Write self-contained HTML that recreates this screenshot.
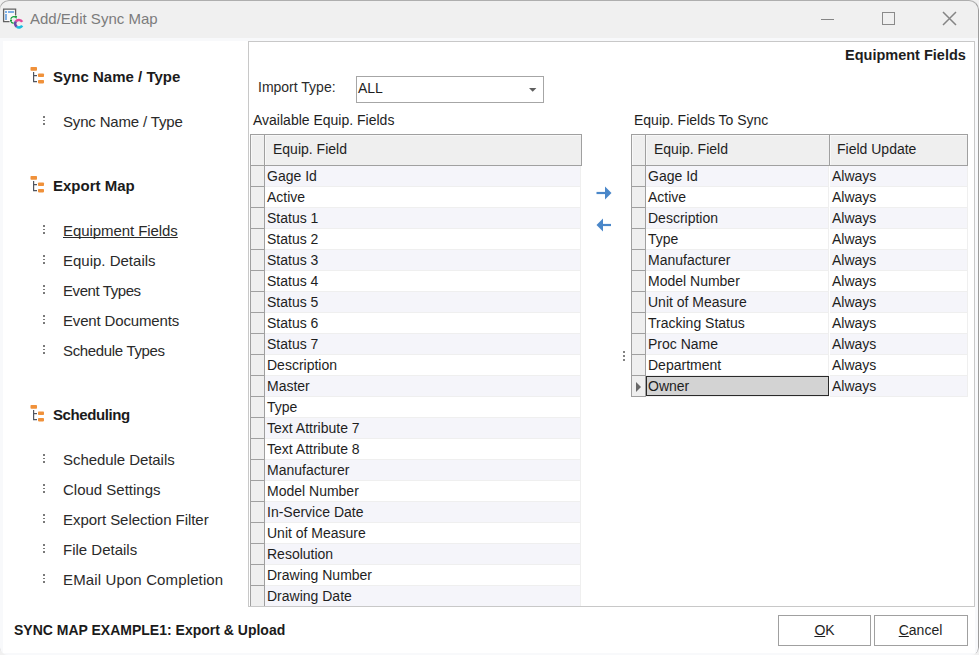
<!DOCTYPE html><html><head><meta charset="utf-8"><style>
*{margin:0;padding:0;box-sizing:border-box}
html,body{width:979px;height:655px;overflow:hidden;background:#f0f0f0;font-family:"Liberation Sans",sans-serif;}
.a{position:absolute}
#win{position:absolute;left:0;top:0;width:979px;height:655px;background:#f8f9fb;border-radius:8px 8px 8px 8px;overflow:hidden}
#tb{position:absolute;left:0;top:0;width:979px;height:38px;background:#f0f0f0}
#content{position:absolute;left:3px;top:41px;width:972px;height:612px;background:#fff}
.title{left:30px;top:8.5px;font-size:15px;color:#7c7c7c;white-space:nowrap;line-height:20px}
.nav{position:absolute;white-space:nowrap;font-size:15px;color:#2a2a2a;line-height:20px}
.navh{font-weight:bold;color:#1b1b1b}
.dots{position:absolute;width:2px;height:10px}
.dots i{position:absolute;left:0;width:2px;height:1.6px;background:#7a7a7a}
.txt{position:absolute;white-space:nowrap;font-size:14px;color:#1e1e1e;line-height:20px}
.grid{position:absolute}
.hdr{position:absolute;background:#efefef;border:1px solid #a0a0a0}
.row{position:absolute;height:21px;border-bottom:1px solid #efefef}
.rh{position:absolute;background:#efefef;border-left:1px solid #a0a0a0;border-right:1px solid #a0a0a0;border-bottom:1px solid #a0a0a0}
.btn{position:absolute;border:1px solid #a0a0a0;background:#fff;font-size:14px;color:#1e1e1e;text-align:center;line-height:28px}
</style></head><body><div id="win">
<div id="tb"></div>
<div id="content"></div>
<svg class="a" style="left:0;top:5px" width="28" height="28" viewBox="0 0 28 28">
<path d="M9.5 16.6H3.6V4.1H15.6V10.5" fill="#f9f9f9" stroke="#626262" stroke-width="1.3"/>
<rect x="5" y="6" width="2" height="2" fill="#7fb0e6"/>
<rect x="8" y="6" width="6" height="2" fill="#7fb0e6"/>
<rect x="5" y="9" width="2" height="6" fill="#7fb0e6"/>
<path d="M10.8 13.9 A3.2 3.2 0 0 1 15.6 12.2" fill="none" stroke="#14a03c" stroke-width="1.3"/>
<path d="M14.3 11.1L17.1 11.1L16.3 14Z" fill="#14a03c"/>
<rect x="10" y="14.6" width="2" height="2" fill="#0d9a34"/>
<path d="M11.2 17 A3 3 0 0 0 13.8 18.2" fill="none" stroke="#14a03c" stroke-width="1.3"/>
<path d="M22.15 16.83 A3.75 3.75 0 0 0 15.83 16.55" fill="none" stroke="#e2479b" stroke-width="2.6"/>
<path d="M15.83 16.55 A3.75 3.75 0 0 0 16.75 21.77" fill="none" stroke="#6a4aa6" stroke-width="2.6"/>
<path d="M16.75 21.77 A3.75 3.75 0 0 0 22.15 20.58" fill="none" stroke="#1bbde0" stroke-width="2.6"/>
</svg>
<div class="a title">Add/Edit Sync Map</div>
<div class="a" style="left:821px;top:18.7px;width:13px;height:1.3px;background:#858585"></div>
<div class="a" style="left:882px;top:12px;width:13px;height:13px;border:1px solid #8a8a8a"></div>
<svg class="a" style="left:942px;top:11px" width="15" height="15" viewBox="0 0 15 15"><path d="M1 1L14 14M14 1L1 14" stroke="#858585" stroke-width="1.5"/></svg>
<svg class="a" style="left:30px;top:67px" width="16" height="17" viewBox="0 0 16 17">
<rect x="0.5" y="0" width="6.5" height="3.7" rx="0.8" fill="#f0913a"/>
<path d="M3.6 5V14.6H7" fill="none" stroke="#50555f" stroke-width="1.2"/>
<path d="M3.6 8.6H7" fill="none" stroke="#50555f" stroke-width="1.2"/>
<rect x="8" y="6.5" width="6" height="3.5" rx="0.8" fill="#f0913a"/>
<rect x="8" y="13" width="6" height="3.4" rx="0.8" fill="#f0913a"/>
</svg><div class="nav navh" style="left:53px;top:67px;letter-spacing:0px">Sync Name / Type</div>
<div class="dots" style="left:43px;top:116.4px"><i style="top:0"></i><i style="top:3.5px"></i><i style="top:7px"></i></div><div class="nav" style="left:63px;top:112px;letter-spacing:-0.17px;">Sync Name / Type</div>
<svg class="a" style="left:30px;top:176px" width="16" height="17" viewBox="0 0 16 17">
<rect x="0.5" y="0" width="6.5" height="3.7" rx="0.8" fill="#f0913a"/>
<path d="M3.6 5V14.6H7" fill="none" stroke="#50555f" stroke-width="1.2"/>
<path d="M3.6 8.6H7" fill="none" stroke="#50555f" stroke-width="1.2"/>
<rect x="8" y="6.5" width="6" height="3.5" rx="0.8" fill="#f0913a"/>
<rect x="8" y="13" width="6" height="3.4" rx="0.8" fill="#f0913a"/>
</svg><div class="nav navh" style="left:53px;top:176px;letter-spacing:0px">Export Map</div>
<div class="dots" style="left:43px;top:225.4px"><i style="top:0"></i><i style="top:3.5px"></i><i style="top:7px"></i></div><div class="nav" style="left:63px;top:221px;letter-spacing:-0.07px;text-decoration:underline;text-underline-offset:0.5px;text-decoration-skip-ink:none;">Equipment Fields</div>
<div class="dots" style="left:43px;top:255.4px"><i style="top:0"></i><i style="top:3.5px"></i><i style="top:7px"></i></div><div class="nav" style="left:63px;top:251px;letter-spacing:0px;">Equip. Details</div>
<div class="dots" style="left:43px;top:285.4px"><i style="top:0"></i><i style="top:3.5px"></i><i style="top:7px"></i></div><div class="nav" style="left:63px;top:281px;letter-spacing:-0.42px;">Event Types</div>
<div class="dots" style="left:43px;top:315.4px"><i style="top:0"></i><i style="top:3.5px"></i><i style="top:7px"></i></div><div class="nav" style="left:63px;top:311px;letter-spacing:-0.16px;">Event Documents</div>
<div class="dots" style="left:43px;top:345.4px"><i style="top:0"></i><i style="top:3.5px"></i><i style="top:7px"></i></div><div class="nav" style="left:63px;top:341px;letter-spacing:-0.34px;">Schedule Types</div>
<svg class="a" style="left:30px;top:405px" width="16" height="17" viewBox="0 0 16 17">
<rect x="0.5" y="0" width="6.5" height="3.7" rx="0.8" fill="#f0913a"/>
<path d="M3.6 5V14.6H7" fill="none" stroke="#50555f" stroke-width="1.2"/>
<path d="M3.6 8.6H7" fill="none" stroke="#50555f" stroke-width="1.2"/>
<rect x="8" y="6.5" width="6" height="3.5" rx="0.8" fill="#f0913a"/>
<rect x="8" y="13" width="6" height="3.4" rx="0.8" fill="#f0913a"/>
</svg><div class="nav navh" style="left:53px;top:405px;letter-spacing:-0.41px">Scheduling</div>
<div class="dots" style="left:43px;top:454.4px"><i style="top:0"></i><i style="top:3.5px"></i><i style="top:7px"></i></div><div class="nav" style="left:63px;top:450px;letter-spacing:-0.06px;">Schedule Details</div>
<div class="dots" style="left:43px;top:484.4px"><i style="top:0"></i><i style="top:3.5px"></i><i style="top:7px"></i></div><div class="nav" style="left:63px;top:480px;letter-spacing:0px;">Cloud Settings</div>
<div class="dots" style="left:43px;top:514.4px"><i style="top:0"></i><i style="top:3.5px"></i><i style="top:7px"></i></div><div class="nav" style="left:63px;top:510px;letter-spacing:-0.05px;">Export Selection Filter</div>
<div class="dots" style="left:43px;top:544.4px"><i style="top:0"></i><i style="top:3.5px"></i><i style="top:7px"></i></div><div class="nav" style="left:63px;top:540px;letter-spacing:0px;">File Details</div>
<div class="dots" style="left:43px;top:574.4px"><i style="top:0"></i><i style="top:3.5px"></i><i style="top:7px"></i></div><div class="nav" style="left:63px;top:570px;letter-spacing:0.13px;">EMail Upon Completion</div>
<div class="a" style="left:248px;top:41px;width:727px;height:566px;border:1px solid #c8c8c8;background:#fff;overflow:hidden">
<div class="txt" style="left:596px;top:3px;font-weight:bold;font-size:14.5px">Equipment Fields</div>
<div class="txt" style="left:9px;top:35px;color:#2a2a2a">Import Type:</div>
<div class="a" style="left:107px;top:34px;width:188px;height:27px;border:1px solid #a6a6a6;background:#fff"></div>
<div class="txt" style="left:109px;top:36px">ALL</div>
<svg class="a" style="left:280px;top:46px" width="8" height="4" viewBox="0 0 8 4"><path d="M0 0H7.4L3.7 3.8Z" fill="#5f5f5f"/></svg>
<div class="txt" style="left:4px;top:68px">Available Equip. Fields</div>
<div class="txt" style="left:385px;top:68px">Equip. Fields To Sync</div>
<div class="hdr" style="left:1px;top:92px;width:15px;height:32px;box-shadow:inset 1px 1px 0 #f8f8f8"></div>
<div class="hdr" style="left:15px;top:92px;width:318px;height:32px;box-shadow:inset 1px 1px 0 #f8f8f8"></div>
<div class="txt" style="left:24px;top:97px;line-height:20px">Equip. Field</div>
<div class="rh" style="left:1px;top:124px;width:15px;height:21px"></div>
<div class="a" style="left:16px;top:124px;width:316px;height:21px;background:#f5f5fa;border-bottom:1px solid #efefef;border-right:1px solid #efefef"></div>
<div class="txt" style="left:18px;top:124px">Gage Id</div>
<div class="rh" style="left:1px;top:145px;width:15px;height:21px"></div>
<div class="a" style="left:16px;top:145px;width:316px;height:21px;background:#ffffff;border-bottom:1px solid #efefef;border-right:1px solid #efefef"></div>
<div class="txt" style="left:18px;top:145px">Active</div>
<div class="rh" style="left:1px;top:166px;width:15px;height:21px"></div>
<div class="a" style="left:16px;top:166px;width:316px;height:21px;background:#f5f5fa;border-bottom:1px solid #efefef;border-right:1px solid #efefef"></div>
<div class="txt" style="left:18px;top:166px">Status 1</div>
<div class="rh" style="left:1px;top:187px;width:15px;height:21px"></div>
<div class="a" style="left:16px;top:187px;width:316px;height:21px;background:#ffffff;border-bottom:1px solid #efefef;border-right:1px solid #efefef"></div>
<div class="txt" style="left:18px;top:187px">Status 2</div>
<div class="rh" style="left:1px;top:208px;width:15px;height:21px"></div>
<div class="a" style="left:16px;top:208px;width:316px;height:21px;background:#f5f5fa;border-bottom:1px solid #efefef;border-right:1px solid #efefef"></div>
<div class="txt" style="left:18px;top:208px">Status 3</div>
<div class="rh" style="left:1px;top:229px;width:15px;height:21px"></div>
<div class="a" style="left:16px;top:229px;width:316px;height:21px;background:#ffffff;border-bottom:1px solid #efefef;border-right:1px solid #efefef"></div>
<div class="txt" style="left:18px;top:229px">Status 4</div>
<div class="rh" style="left:1px;top:250px;width:15px;height:21px"></div>
<div class="a" style="left:16px;top:250px;width:316px;height:21px;background:#f5f5fa;border-bottom:1px solid #efefef;border-right:1px solid #efefef"></div>
<div class="txt" style="left:18px;top:250px">Status 5</div>
<div class="rh" style="left:1px;top:271px;width:15px;height:21px"></div>
<div class="a" style="left:16px;top:271px;width:316px;height:21px;background:#ffffff;border-bottom:1px solid #efefef;border-right:1px solid #efefef"></div>
<div class="txt" style="left:18px;top:271px">Status 6</div>
<div class="rh" style="left:1px;top:292px;width:15px;height:21px"></div>
<div class="a" style="left:16px;top:292px;width:316px;height:21px;background:#f5f5fa;border-bottom:1px solid #efefef;border-right:1px solid #efefef"></div>
<div class="txt" style="left:18px;top:292px">Status 7</div>
<div class="rh" style="left:1px;top:313px;width:15px;height:21px"></div>
<div class="a" style="left:16px;top:313px;width:316px;height:21px;background:#ffffff;border-bottom:1px solid #efefef;border-right:1px solid #efefef"></div>
<div class="txt" style="left:18px;top:313px">Description</div>
<div class="rh" style="left:1px;top:334px;width:15px;height:21px"></div>
<div class="a" style="left:16px;top:334px;width:316px;height:21px;background:#f5f5fa;border-bottom:1px solid #efefef;border-right:1px solid #efefef"></div>
<div class="txt" style="left:18px;top:334px">Master</div>
<div class="rh" style="left:1px;top:355px;width:15px;height:21px"></div>
<div class="a" style="left:16px;top:355px;width:316px;height:21px;background:#ffffff;border-bottom:1px solid #efefef;border-right:1px solid #efefef"></div>
<div class="txt" style="left:18px;top:355px">Type</div>
<div class="rh" style="left:1px;top:376px;width:15px;height:21px"></div>
<div class="a" style="left:16px;top:376px;width:316px;height:21px;background:#f5f5fa;border-bottom:1px solid #efefef;border-right:1px solid #efefef"></div>
<div class="txt" style="left:18px;top:376px">Text Attribute 7</div>
<div class="rh" style="left:1px;top:397px;width:15px;height:21px"></div>
<div class="a" style="left:16px;top:397px;width:316px;height:21px;background:#ffffff;border-bottom:1px solid #efefef;border-right:1px solid #efefef"></div>
<div class="txt" style="left:18px;top:397px">Text Attribute 8</div>
<div class="rh" style="left:1px;top:418px;width:15px;height:21px"></div>
<div class="a" style="left:16px;top:418px;width:316px;height:21px;background:#f5f5fa;border-bottom:1px solid #efefef;border-right:1px solid #efefef"></div>
<div class="txt" style="left:18px;top:418px">Manufacturer</div>
<div class="rh" style="left:1px;top:439px;width:15px;height:21px"></div>
<div class="a" style="left:16px;top:439px;width:316px;height:21px;background:#ffffff;border-bottom:1px solid #efefef;border-right:1px solid #efefef"></div>
<div class="txt" style="left:18px;top:439px">Model Number</div>
<div class="rh" style="left:1px;top:460px;width:15px;height:21px"></div>
<div class="a" style="left:16px;top:460px;width:316px;height:21px;background:#f5f5fa;border-bottom:1px solid #efefef;border-right:1px solid #efefef"></div>
<div class="txt" style="left:18px;top:460px">In-Service Date</div>
<div class="rh" style="left:1px;top:481px;width:15px;height:21px"></div>
<div class="a" style="left:16px;top:481px;width:316px;height:21px;background:#ffffff;border-bottom:1px solid #efefef;border-right:1px solid #efefef"></div>
<div class="txt" style="left:18px;top:481px">Unit of Measure</div>
<div class="rh" style="left:1px;top:502px;width:15px;height:21px"></div>
<div class="a" style="left:16px;top:502px;width:316px;height:21px;background:#f5f5fa;border-bottom:1px solid #efefef;border-right:1px solid #efefef"></div>
<div class="txt" style="left:18px;top:502px">Resolution</div>
<div class="rh" style="left:1px;top:523px;width:15px;height:21px"></div>
<div class="a" style="left:16px;top:523px;width:316px;height:21px;background:#ffffff;border-bottom:1px solid #efefef;border-right:1px solid #efefef"></div>
<div class="txt" style="left:18px;top:523px">Drawing Number</div>
<div class="rh" style="left:1px;top:544px;width:15px;height:21px"></div>
<div class="a" style="left:16px;top:544px;width:316px;height:21px;background:#f5f5fa;border-bottom:1px solid #efefef;border-right:1px solid #efefef"></div>
<div class="txt" style="left:18px;top:544px">Drawing Date</div>
<div class="hdr" style="left:382px;top:92px;width:15px;height:32px;box-shadow:inset 1px 1px 0 #f8f8f8"></div>
<div class="hdr" style="left:396px;top:92px;width:185px;height:32px;box-shadow:inset 1px 1px 0 #f8f8f8"></div>
<div class="txt" style="left:405px;top:97px;line-height:20px">Equip. Field</div>
<div class="hdr" style="left:580px;top:92px;width:139px;height:32px;box-shadow:inset 1px 1px 0 #f8f8f8"></div>
<div class="txt" style="left:588px;top:97px;line-height:20px">Field Update</div>
<div class="rh" style="left:382px;top:124px;width:15px;height:21px"></div>
<div class="a" style="left:397px;top:124px;width:183px;height:21px;background:#f5f5fa;border-bottom:1px solid #efefef;border-right:1px solid #efefef"></div>
<div class="txt" style="left:399px;top:124px">Gage Id</div>
<div class="a" style="left:581px;top:124px;width:138px;height:21px;background:#f5f5fa;border-bottom:1px solid #efefef;border-right:1px solid #efefef"></div>
<div class="txt" style="left:583px;top:124px">Always</div>
<div class="rh" style="left:382px;top:145px;width:15px;height:21px"></div>
<div class="a" style="left:397px;top:145px;width:183px;height:21px;background:#ffffff;border-bottom:1px solid #efefef;border-right:1px solid #efefef"></div>
<div class="txt" style="left:399px;top:145px">Active</div>
<div class="a" style="left:581px;top:145px;width:138px;height:21px;background:#ffffff;border-bottom:1px solid #efefef;border-right:1px solid #efefef"></div>
<div class="txt" style="left:583px;top:145px">Always</div>
<div class="rh" style="left:382px;top:166px;width:15px;height:21px"></div>
<div class="a" style="left:397px;top:166px;width:183px;height:21px;background:#f5f5fa;border-bottom:1px solid #efefef;border-right:1px solid #efefef"></div>
<div class="txt" style="left:399px;top:166px">Description</div>
<div class="a" style="left:581px;top:166px;width:138px;height:21px;background:#f5f5fa;border-bottom:1px solid #efefef;border-right:1px solid #efefef"></div>
<div class="txt" style="left:583px;top:166px">Always</div>
<div class="rh" style="left:382px;top:187px;width:15px;height:21px"></div>
<div class="a" style="left:397px;top:187px;width:183px;height:21px;background:#ffffff;border-bottom:1px solid #efefef;border-right:1px solid #efefef"></div>
<div class="txt" style="left:399px;top:187px">Type</div>
<div class="a" style="left:581px;top:187px;width:138px;height:21px;background:#ffffff;border-bottom:1px solid #efefef;border-right:1px solid #efefef"></div>
<div class="txt" style="left:583px;top:187px">Always</div>
<div class="rh" style="left:382px;top:208px;width:15px;height:21px"></div>
<div class="a" style="left:397px;top:208px;width:183px;height:21px;background:#f5f5fa;border-bottom:1px solid #efefef;border-right:1px solid #efefef"></div>
<div class="txt" style="left:399px;top:208px">Manufacturer</div>
<div class="a" style="left:581px;top:208px;width:138px;height:21px;background:#f5f5fa;border-bottom:1px solid #efefef;border-right:1px solid #efefef"></div>
<div class="txt" style="left:583px;top:208px">Always</div>
<div class="rh" style="left:382px;top:229px;width:15px;height:21px"></div>
<div class="a" style="left:397px;top:229px;width:183px;height:21px;background:#ffffff;border-bottom:1px solid #efefef;border-right:1px solid #efefef"></div>
<div class="txt" style="left:399px;top:229px">Model Number</div>
<div class="a" style="left:581px;top:229px;width:138px;height:21px;background:#ffffff;border-bottom:1px solid #efefef;border-right:1px solid #efefef"></div>
<div class="txt" style="left:583px;top:229px">Always</div>
<div class="rh" style="left:382px;top:250px;width:15px;height:21px"></div>
<div class="a" style="left:397px;top:250px;width:183px;height:21px;background:#f5f5fa;border-bottom:1px solid #efefef;border-right:1px solid #efefef"></div>
<div class="txt" style="left:399px;top:250px">Unit of Measure</div>
<div class="a" style="left:581px;top:250px;width:138px;height:21px;background:#f5f5fa;border-bottom:1px solid #efefef;border-right:1px solid #efefef"></div>
<div class="txt" style="left:583px;top:250px">Always</div>
<div class="rh" style="left:382px;top:271px;width:15px;height:21px"></div>
<div class="a" style="left:397px;top:271px;width:183px;height:21px;background:#ffffff;border-bottom:1px solid #efefef;border-right:1px solid #efefef"></div>
<div class="txt" style="left:399px;top:271px">Tracking Status</div>
<div class="a" style="left:581px;top:271px;width:138px;height:21px;background:#ffffff;border-bottom:1px solid #efefef;border-right:1px solid #efefef"></div>
<div class="txt" style="left:583px;top:271px">Always</div>
<div class="rh" style="left:382px;top:292px;width:15px;height:21px"></div>
<div class="a" style="left:397px;top:292px;width:183px;height:21px;background:#f5f5fa;border-bottom:1px solid #efefef;border-right:1px solid #efefef"></div>
<div class="txt" style="left:399px;top:292px">Proc Name</div>
<div class="a" style="left:581px;top:292px;width:138px;height:21px;background:#f5f5fa;border-bottom:1px solid #efefef;border-right:1px solid #efefef"></div>
<div class="txt" style="left:583px;top:292px">Always</div>
<div class="rh" style="left:382px;top:313px;width:15px;height:21px"></div>
<div class="a" style="left:397px;top:313px;width:183px;height:21px;background:#ffffff;border-bottom:1px solid #efefef;border-right:1px solid #efefef"></div>
<div class="txt" style="left:399px;top:313px">Department</div>
<div class="a" style="left:581px;top:313px;width:138px;height:21px;background:#ffffff;border-bottom:1px solid #efefef;border-right:1px solid #efefef"></div>
<div class="txt" style="left:583px;top:313px">Always</div>
<div class="rh" style="left:382px;top:334px;width:15px;height:21px"></div>
<div class="a" style="left:397px;top:334px;width:183px;height:21px;background:#f5f5fa;border-bottom:1px solid #efefef;border-right:1px solid #efefef"></div>
<div class="a" style="left:397px;top:334px;width:183px;height:20px;background:#d3d3d3;border:1px solid #2a2a2a"></div>
<div class="txt" style="left:399px;top:334px">Owner</div>
<div class="a" style="left:581px;top:334px;width:138px;height:21px;background:#f5f5fa;border-bottom:1px solid #efefef;border-right:1px solid #efefef"></div>
<div class="txt" style="left:583px;top:334px">Always</div>
<svg class="a" style="left:387px;top:339.5px" width="6" height="10" viewBox="0 0 6 10"><path d="M0 0L5 5L0 10Z" fill="#686868"/></svg>
<svg class="a" style="left:347px;top:144px" width="16" height="46" viewBox="0 0 16 46">
<path d="M0.5 7H9.5" stroke="#4a87c9" stroke-width="2.2"/><path d="M9 0.5L15.5 7L9 13.5Z" fill="#4a87c9"/>
<path d="M6 39H15" stroke="#4a87c9" stroke-width="2.2"/><path d="M7 32.5L0.5 39L7 45.5Z" fill="#4a87c9"/>
</svg>
<div class="a" style="left:374.29999999999995px;top:309.4px;width:2px;height:2px;border-radius:1px;background:#5a5a5a;box-shadow:0 4px 0 #5a5a5a,0 8px 0 #5a5a5a"></div>
</div>
<div class="txt" style="left:14px;top:620px;font-weight:bold;color:#1b1b1b">SYNC MAP EXAMPLE1: Export &amp; Upload</div>
<div class="btn" style="left:778px;top:615px;width:93px;height:31px"><u>O</u>K</div>
<div class="btn" style="left:874px;top:615px;width:94px;height:31px;padding-right:1px"><u>C</u>ancel</div>
<div class="a" style="left:-1px;top:0;width:980px;height:658px;border:1px solid #aeaeae;border-right-color:#9c9c9c;border-radius:10px;box-shadow:0 0 0 30px #ebebeb"></div>
</div></body></html>
